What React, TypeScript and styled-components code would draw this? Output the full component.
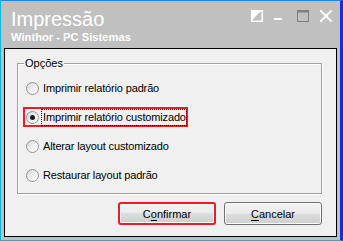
import React from 'react'
import styled, { createGlobalStyle } from 'styled-components'

const GlobalStyle = createGlobalStyle`
  html,
  body {
    margin: 0;
    padding: 0;
    background: #ffffff;
  }
  body {
    font-family: 'Liberation Sans', Arial, sans-serif;
  }
  * {
    box-sizing: border-box;
  }
`

type Option = {
  label: string
  checked?: boolean
  marked?: boolean
}

const options: Option[] = [
  { label: 'Imprimir relatório padrão' },
  { label: 'Imprimir relatório customizado', checked: true, marked: true },
  { label: 'Alterar layout customizado' },
  { label: 'Restaurar layout padrão' },
]

function HelpIcon() {
  return (
    <svg width="12" height="12" viewBox="0 0 12 12">
      <polygon points="0,0 11,0 0,11" fill="#ffffff" />
      <rect x="0.75" y="0.75" width="10.5" height="10.5" fill="none" stroke="#ffffff" strokeWidth="1.5" />
    </svg>
  )
}

function MinimizeIcon() {
  return (
    <svg width="12" height="12" viewBox="0 0 12 12">
      <rect x="0" y="8" width="8" height="2" fill="#ffffff" />
    </svg>
  )
}

function MaximizeIcon() {
  return (
    <svg width="12" height="12" viewBox="0 0 12 12">
      <rect x="0.5" y="0.5" width="11" height="11" fill="none" stroke="#808080" strokeWidth="1" />
      <rect x="0" y="0" width="12" height="2.5" fill="#808080" />
    </svg>
  )
}

function CloseIcon() {
  return (
    <svg width="12" height="12" viewBox="0 0 12 12">
      <path d="M1 1 L11 11 M11 1 L1 11" stroke="#ffffff" strokeWidth="2" strokeLinecap="square" />
    </svg>
  )
}

function App() {
  return (
    <>
      <GlobalStyle />
      <Window>
        <TitleBar>
          <TitleText>
            <Title>Impressão</Title>
            <Subtitle>Winthor - PC Sistemas</Subtitle>
          </TitleText>
          <Controls>
            <HelpIcon />
            <MinimizeIcon />
            <MaximizeIcon />
            <CloseIcon />
          </Controls>
        </TitleBar>

        <Client>
          <GroupBox>
            <Legend>Opções</Legend>
            <OptionList>
              {options.map((option) => (
                <OptionRow key={option.label} marked={!!option.marked}>
                  <Radio checked={!!option.checked} />
                  <OptionLabel focused={!!option.checked}>{option.label}</OptionLabel>
                </OptionRow>
              ))}
            </OptionList>
          </GroupBox>

          <Footer>
            <Button marked>
              C<u>o</u>nfirmar
            </Button>
            <Button>
              <u>C</u>ancelar
            </Button>
          </Footer>
        </Client>
      </Window>
    </>
  )
}
export default App

// Inner Components

const Window = styled.div`
  display: flex;
  flex-direction: column;
  width: 343px;
  height: 241px;
  padding: 0 3px 3px 3px;
  background: #c0c0c0;
  border-left: 1px solid #12b6d8;
  border-top: 1px solid #1a86f0;
  border-right: 3px solid #0a2cff;
  border-bottom: 1px solid #12b6d8;
`

const TitleBar = styled.div`
  display: flex;
  justify-content: space-between;
  align-items: flex-start;
  height: 47px;
  margin: 0 -3px;
  padding: 7px 8px 0 10px;
`

const TitleText = styled.div`
  display: flex;
  flex-direction: column;
  color: #ffffff;
`

const Title = styled.div`
  font-size: 20px;
  line-height: 23px;
`

const Subtitle = styled.div`
  font-size: 11.2px;
  font-weight: 700;
  line-height: 13px;
`

const Controls = styled.div`
  display: flex;
  gap: 11px;
  margin-top: 2px;
  & > svg {
    display: block;
  }
`

const Client = styled.div`
  display: flex;
  flex-direction: column;
  flex: 1;
  padding: 8px 14px 0 12px;
  background: #f0f0f0;
  border: 1px solid #000000;
`

const GroupBox = styled.fieldset`
  margin: 0 0 8px;
  min-inline-size: 0;
  padding: 8px 5px 8px 5px;
  border: 1px solid #a0a0a0;
  box-shadow:
    1px 1px 0 #ffffff,
    inset 1px 1px 0 #ffffff;
`

const Legend = styled.legend`
  margin-left: 1px;
  padding: 0 1px;
  font-size: 11px;
  line-height: 13px;
  color: #000000;
`

const OptionList = styled.div`
  display: flex;
  flex-direction: column;
  gap: 9px;
`

const OptionRow = styled.div<{ marked: boolean }>`
  display: flex;
  align-items: center;
  align-self: flex-start;
  gap: 3px;
  height: 20px;
  padding: 0 0 0 1px;
  border: 2px solid ${({ marked }) => (marked ? '#ec1c24' : 'transparent')};
`

const Radio = styled.span<{ checked: boolean }>`
  position: relative;
  flex: none;
  width: 13px;
  height: 13px;
  border-radius: 50%;
  border: 1px solid #939393;
  background: linear-gradient(135deg, #d4d4d4 0%, #f4f4f4 60%, #ffffff 100%);
  &::after {
    content: '';
    display: ${({ checked }) => (checked ? 'block' : 'none')};
    position: absolute;
    left: 3px;
    top: 3px;
    width: 5px;
    height: 5px;
    border-radius: 50%;
    background: #1b1b1b;
  }
`

const OptionLabel = styled.span<{ focused: boolean }>`
  padding: 1px 0 1px 1px;
  font-size: 11px;
  letter-spacing: -0.15px;
  line-height: 13px;
  color: #000000;
  white-space: nowrap;
  outline: ${({ focused }) => (focused ? '1px dotted #000000' : 'none')};
  outline-offset: 0;
`

const Footer = styled.div`
  display: flex;
  justify-content: flex-end;
  gap: 8px;
`

const Button = styled.button<{ marked?: boolean }>`
  width: 98px;
  height: 23px;
  padding: 0;
  font-family: 'Liberation Sans', Arial, sans-serif;
  font-size: 11px;
  color: #000000;
  border-radius: 3px;
  border: ${({ marked }) => (marked ? '2px solid #ec1c24' : '1px solid #707070')};
  background: linear-gradient(#f2f2f2 0%, #ebebeb 50%, #dddddd 50%, #cfcfcf 100%);
  box-shadow: inset 0 0 0 1px #fbfbfb;
  & u {
    text-underline-offset: 2px;
  }
`
